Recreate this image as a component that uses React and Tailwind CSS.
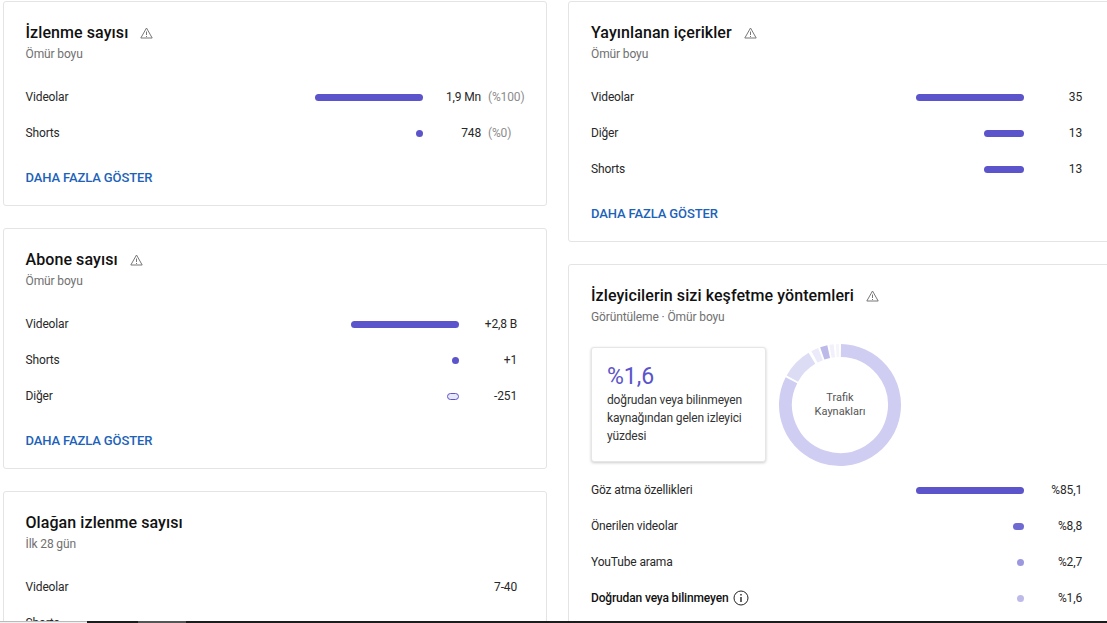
import React from 'react';

const font = 'font-["Roboto",sans-serif]';

const WarnIcon = () => (
  <svg width="13" height="12" viewBox="0 0 13 12" fill="none" stroke="#777" strokeWidth="1" className="ml-3 shrink-0">
    <path d="M6.5 1 L12.2 11 H0.8 Z" strokeLinejoin="round" />
    <path d="M6.5 4.5 V8 M6.5 9 V10" />
  </svg>
);

const InfoIcon = () => (
  <svg width="16" height="16" viewBox="0 0 16 16" fill="none" stroke="#222" className="ml-[5px] shrink-0">
    <circle cx="8" cy="8" r="7" strokeWidth="1" />
    <path d="M8 7 V12 M8 4 V5.5" strokeWidth="1.4" />
  </svg>
);

const Bar = ({ width, color = 'bg-[#5b54cb]' }) => (
  <div className="flex w-[108px] justify-end">
    <div className={`h-[7px] rounded-full ${color}`} style={{ width }} />
  </div>
);

const Row = ({ label, width, value, pct, color, bold, info, outline }) => (
  <div className={`flex h-9 items-center text-xs tracking-[-0.15px] text-[#282828] ${pct === undefined ? 'pr-2' : ''}`}>
    <span className={`flex flex-1 items-center ${bold ? 'font-medium text-[#111]' : ''}`}>
      {label}
      {info && <InfoIcon />}
    </span>
    {outline ? (
      <div className="flex w-[108px] justify-end">
        <div className="h-[7px] w-3 rounded-full border border-[#5b54cb] bg-[#e9e8f8]" />
      </div>
    ) : (
      width && <Bar width={width} color={color} />
    )}
    <span className="w-[58px] text-right">{value}</span>
    {pct !== undefined && <span className="w-11 pl-[7px] text-[#8c8c8c]">{pct}</span>}
  </div>
);

const More = ({ className = '' }) => (
  <div className={`text-[13px] font-medium tracking-[-0.12px] text-[#1c62b9] ${className}`}>DAHA FAZLA GÖSTER</div>
);

const Card = ({ title, sub, warn = true, children, className = '' }) => (
  <div className={`rounded-[3px] border border-[#e4e4e4] bg-white px-[22px] pt-[21px] ${className}`}>
    <div className="flex h-5 items-center text-base leading-5 font-medium tracking-[0.08px] text-[#111]">
      {title}
      {warn && <WarnIcon />}
    </div>
    <div className="mt-px mb-[15px] text-xs leading-5 tracking-[-0.12px] text-[#707070]">{sub}</div>
    {children}
  </div>
);

// donut segments, clockwise from 12 o'clock
const segments = [
  { from: 1, to: 297, color: '#cfcdf1' },
  { from: 299, to: 329, color: '#dddcf5' },
  { from: 332, to: 339, color: '#ebeafa' },
  { from: 341, to: 348, color: '#bdbaea' },
  { from: 350, to: 354, color: '#f1f0fb' },
  { from: 356, to: 359, color: '#f5f5fc' },
];

const arc = (from, to, r = 54.5, c = 62) => {
  const pt = (a) => {
    const t = ((a - 90) * Math.PI) / 180;
    return `${c + r * Math.cos(t)} ${c + r * Math.sin(t)}`;
  };
  return `M${pt(from)} A${r} ${r} 0 ${to - from > 180 ? 1 : 0} 1 ${pt(to)}`;
};

const Donut = () => (
  <div className="relative mt-px ml-[12px] h-[124px] w-[124px]">
    <svg width="124" height="124" viewBox="0 0 124 124" fill="none">
      {segments.map((s) => (
        <path key={s.from} d={arc(s.from, s.to)} stroke={s.color} strokeWidth="13" />
      ))}
    </svg>
    <div className="absolute inset-0 flex flex-col items-center justify-center text-[11px] leading-[14px] text-[#555]">
      <span>Trafik</span>
      <span>Kaynakları</span>
    </div>
  </div>
);

export default function App() {
  return (
    <div className={`relative h-[623px] w-[1107px] overflow-hidden bg-white ${font}`}>
      <div className="flex items-start pt-px pl-[2.5px]">
        <div className="flex w-[544.5px] shrink-0 flex-col gap-[22px]">
          <Card title="İzlenme sayısı" sub="Ömür boyu" className="h-[205px] pr-[21px]">
            <Row label="Videolar" width="108px" value="1,9 Mn" pct="(%100)" />
            <Row label="Shorts" width="7px" value="748" pct="(%0)" />
            <More className="mt-[17px]" />
          </Card>
          <Card title="Abone sayısı" sub="Ömür boyu" className="h-[241px] pr-[21px]">
            <Row label="Videolar" width="108px" value="+2,8 B" />
            <Row label="Shorts" width="7px" value="+1" />
            <Row label="Diğer" outline value="-251" />
            <More className="mt-[17px]" />
          </Card>
          <Card title="Olağan izlenme sayısı" sub="İlk 28 gün" warn={false} className="h-[200px] pr-[21px]">
            <Row label="Videolar" value="7-40" />
            <Row label="Shorts" value="" />
          </Card>
        </div>
        <div className="ml-[21px] flex w-[545px] shrink-0 flex-col gap-[22px]">
          <Card title="Yayınlanan içerikler" sub="Ömür boyu" className="h-[241px]">
            <Row label="Videolar" width="108px" value="35" />
            <Row label="Diğer" width="40px" value="13" />
            <Row label="Shorts" width="40px" value="13" />
            <More className="mt-[17px]" />
          </Card>
          <Card title="İzleyicilerin sizi keşfetme yöntemleri" sub="Görüntüleme · Ömür boyu" className="h-[400px]">
            <div className="flex items-start">
              <div className="mt-[5px] h-[115px] w-[175px] rounded-[3px] border border-[#e6e6e6] bg-white px-[15px] pt-[14px] shadow-[0_1px_3px_rgba(0,0,0,0.2)]">
                <div className="text-[23px] leading-[30px] text-[#5b54cb]">%1,6</div>
                <div className="-mt-px text-xs leading-[18px] tracking-[-0.15px] text-[#333]">
                  doğrudan veya bilinmeyen kaynağından gelen izleyici yüzdesi
                </div>
              </div>
              <Donut />
            </div>
            <div className="mt-[5px]">
              <Row label="Göz atma özellikleri" width="108px" value="%85,1" />
              <Row label="Önerilen videolar" width="11px" value="%8,8" color="bg-[#6f69d2]" />
              <Row label="YouTube arama" width="7px" value="%2,7" color="bg-[#9c98e0]" />
              <Row label="Doğrudan veya bilinmeyen" width="7px" value="%1,6" color="bg-[#bdbaea]" bold info />
            </div>
          </Card>
        </div>
      </div>
      {/* browser edge along the bottom of the capture */}
      <div className="absolute inset-x-0 bottom-0 flex h-[2px] bg-[#1c1c1c]">
        <div className="w-[87px] border-t border-[#bbbbbb] bg-[#f0f0f0]" />
        <div className="ml-[51px] w-[48px] bg-[#555]" />
      </div>
    </div>
  );
}
